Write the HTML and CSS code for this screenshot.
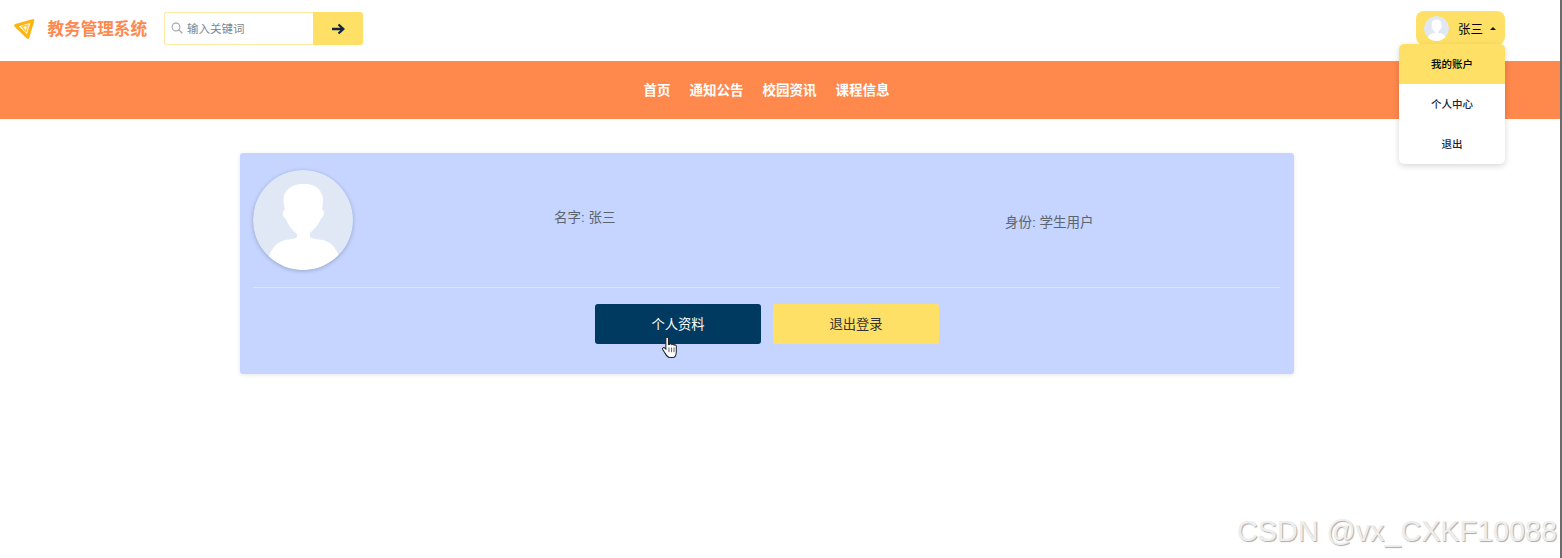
FILE: index.html
```html
<!DOCTYPE html>
<html lang="zh-CN">
<head>
<meta charset="utf-8">
<title>教务管理系统</title>
<link rel="stylesheet" href="styles.css">
</head>
<body>
<div class="page">
  <header class="topbar">
    <div class="brand">
      <svg class="logo" viewBox="0 0 22 22"><path d="M1.750 8.500 L18.700 3.700 L13.700 20.200 Z" fill="none" stroke="#ffb50f" stroke-width="3.200" stroke-linejoin="round"/><path d="M8 9.500 L14 8 L12 14.800 Z" fill="none" stroke="#ffc94a" stroke-width="1.500" stroke-linejoin="round"/></svg>
      <span class="brand-name">教务管理系统</span>
    </div>
    <form class="search">
      <div class="search-field">
        <svg class="search-icon" viewBox="0 0 12 12"><circle cx="5" cy="5" r="3.9" fill="none" stroke="#a3a8ae" stroke-width="1.1"/><path d="M8 8 L11 11" stroke="#a3a8ae" stroke-width="1.2" stroke-linecap="round"/></svg>
        <span class="search-placeholder">输入关键词</span>
      </div>
      <div class="search-btn">
        <svg class="arrow" viewBox="0 0 14 12"><path d="M1 6 H12 M7.500 1.500 L12.300 6 L7.500 10.500" fill="none" stroke="#14263f" stroke-width="2.300"/></svg>
      </div>
    </form>
    <div class="user">
      <div class="user-btn">
        <svg class="user-avatar" viewBox="0 0 100 100"><use href="#person"/></svg>
        <span class="user-name">张三</span>
        <span class="caret"></span>
      </div>
      <ul class="menu">
        <li class="menu-item active">我的账户</li>
        <li class="menu-item">个人中心</li>
        <li class="menu-item">退出</li>
      </ul>
    </div>
  </header>
  <nav class="nav">
    <a class="nav-link">首页</a>
    <a class="nav-link">通知公告</a>
    <a class="nav-link">校园资讯</a>
    <a class="nav-link">课程信息</a>
  </nav>
  <main class="main">
    <section class="card">
      <div class="profile">
        <svg class="avatar" viewBox="0 0 100 100">
          <defs>
            <clipPath id="disc"><circle cx="50" cy="50" r="50"/></clipPath>
            <g id="person" clip-path="url(#disc)">
              <circle cx="50" cy="50" r="50" fill="#e0e8f5"/>
              <path fill="#fff" d="M50 14 C62 13 70 20 70 30 C70 35 69 38 69.500 40 C72 41 71.500 47 67.500 49 C66 55 60 60 57 63 L57 67 C60 69 64 69 70 70 C78 72 83 78 86 86 L86 100 L16 100 L16 86 C19 78 24 72 32 70 C37 69 42 69 44 67 L44 64 C39 60 34.500 54 33 49 C29 47 29 41 32 40 C31.500 37 30.500 34 30.500 30 C30.500 20 39 14 50 14 Z"/>
            </g>
          </defs>
          <use href="#person"/>
        </svg>
        <div class="fact fact-name">名字: 张三</div>
        <div class="fact fact-role">身份: 学生用户</div>
      </div>
      <div class="actions">
        <button class="btn btn-dark" type="button">个人资料</button>
        <button class="btn btn-yellow" type="button">退出登录</button>
      </div>
    </section>
  </main>
  <svg class="cursor" viewBox="0 0 16 22"><path d="M4.500 2 C4.500 .8 7 .8 7 2 L7 8 L8 8 C8.500 7 10 7 10.300 8.200 C11 7.500 12.300 7.700 12.500 8.800 C13.200 8.200 14.500 8.500 14.500 10 L14.500 15 C14.500 18 13.500 20.500 11 20.500 L8 20.500 C6 20.500 5 18.500 3.500 16 L1.500 13 C.8 11.500 2.500 10.500 3.500 11.500 L4.500 12.500 Z" fill="#fff" stroke="#222" stroke-width="1"/><path d="M7.500 11 V15.500 M10 11 V15.500 M12.300 11 V15.500" stroke="#222" stroke-width=".7"/></svg>
  <div class="watermark">CSDN @vx_CXKF10088</div>
</div>
</body>
</html>
```
FILE: styles.css
```css
* { box-sizing: border-box; }
html, body { margin: 0; padding: 0; height: 100%; overflow: hidden; background: #fff; }
body { font-family: "Liberation Sans", "Noto Sans CJK SC", sans-serif; color: #333; }
.page { position: relative; height: 558px; border-right: 2px solid #6b6b6b; }

.topbar { position: relative; display: flex; align-items: center; height: 61px; padding-left: 14px; padding-bottom: 4px; }
.brand { display: flex; align-items: center; width: 150px; margin-bottom: 1px; }
.logo { width: 22px; height: 22px; margin-right: 11.500px; flex: none; }
.brand-name { font-size: 16.600px; font-weight: 700; color: #ff884d; white-space: nowrap; }

.search { display: flex; height: 33px; }
.search-field { display: flex; align-items: center; width: 149px; padding-left: 6px; padding-bottom: 1px; border: 1px solid #ffe9a6; border-right: 0; border-radius: 3px 0 0 3px; background: #fff; }
.search-icon { width: 12px; height: 12px; margin-right: 4px; }
.search-placeholder { font-size: 11.500px; color: #7d8590; }
.search-btn { display: flex; align-items: center; justify-content: center; width: 50px; background: #ffe066; border-radius: 0 3px 3px 0; }
.arrow { width: 14px; height: 12px; }

.user { position: absolute; top: 11px; right: 55px; }
.user-btn { display: flex; align-items: center; width: 89px; height: 34px; padding-left: 8px; background: #ffe066; border-radius: 8px; }
.user-avatar { width: 25px; height: 25px; margin-right: 9px; }
.user-name { font-size: 12.500px; color: #000; }
.caret { width: 0; height: 0; margin-left: 7px; border-left: 3.500px solid transparent; border-right: 3.500px solid transparent; border-bottom: 3.500px solid #111; }
.menu { position: absolute; z-index: 2; top: 33px; right: 0; width: 106px; margin: 0; padding: 0; list-style: none; background: #fff; border-radius: 5px; overflow: hidden; box-shadow: 0 2px 6px rgba(0, 0, 0, .16); }
.menu-item { display: flex; align-items: center; justify-content: center; height: 40px; padding-bottom: 2px; font-size: 10.500px; font-weight: 500; color: #1a2338; }
.menu-item.active { background: #ffe066; color: #000; }

.nav { display: flex; justify-content: center; align-items: center; gap: 19px; height: 58px; padding-right: 27px; padding-bottom: 2px; background: #ff884d; }
.nav-link { font-size: 13.500px; font-weight: 700; color: #fff; }

.main { display: flex; justify-content: center; padding: 34px 266px 0 240px; }
.card { width: 1054px; height: 221px; padding: 17px 14px 0 13px; background: #c5d5ff; border-radius: 3px; box-shadow: 0 1px 4px rgba(0, 0, 0, .1); }
.profile { display: flex; height: 118px; border-bottom: 1px solid #dbe4fb; }
.avatar { width: 100px; height: 100px; border-radius: 50%; flex: none; box-shadow: 0 1px 4px rgba(0, 0, 0, .22); }
.fact { font-size: 13.500px; line-height: 16px; color: #5c6470; white-space: nowrap; }
.fact-name { margin: 40px 0 0 201px; width: 451px; }
.fact-role { margin: 45px 0 0 0; }
.actions { display: flex; justify-content: center; gap: 12px; padding-top: 16px; padding-left: 1px; }
.btn { width: 166px; height: 40px; padding: 0 0 2px; border: 0; border-radius: 3px; font: 13.300px "Liberation Sans", "Noto Sans CJK SC", sans-serif; }
.btn-dark { background: #003a61; color: #fff; }
.btn-yellow { background: #ffe066; color: #333; }

.cursor { position: absolute; left: 661px; top: 336px; width: 17px; height: 23px; }
.watermark { position: absolute; right: 3px; bottom: 11px; font-size: 28.750px; line-height: 32px; color: #eee; text-shadow: 1px 1px 1px #aaa; white-space: nowrap; }
```
